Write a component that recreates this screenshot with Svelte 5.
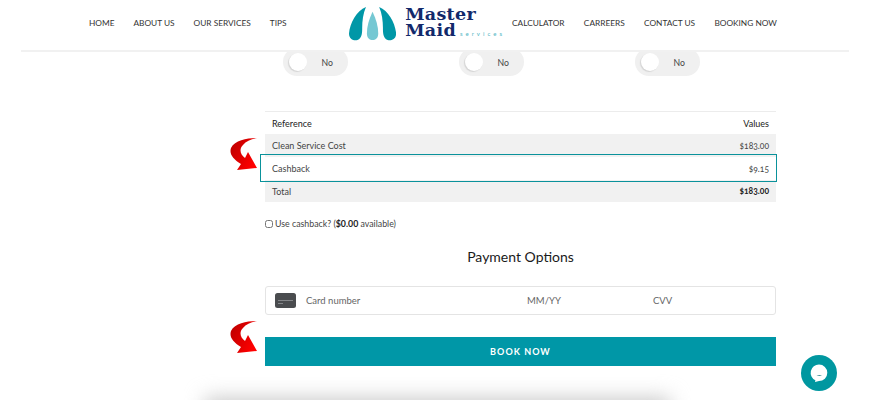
<script>
  const navLeft = ['HOME', 'ABOUT US', 'OUR SERVICES', 'TIPS'];
  const navRight = ['CALCULATOR', 'CARREERS', 'CONTACT US', 'BOOKING NOW'];
  const rows = [
    { label: 'Clean Service Cost', value: '$183.00', shaded: true },
    { label: 'Cashback', value: '$9.15' },
    { label: 'Total', value: '$183.00', shaded: true, strong: true }
  ];
  const arrow = 'M27 1C17 1 5 3 1 11C-1 17 3 22 11 27L7 33L27 31L18 15L15 21C10 17 9 12 13 8C16 4 21 2 27 1Z';
</script>

<div class="page">
  <header>
    <nav class="nav-left">
      {#each navLeft as item}<a href="#top">{item}</a>{/each}
    </nav>
    <div class="logo">
      <svg width="50" height="36" viewBox="0 0 50 36">
        <path d="M18 0C8 4 1 17 0 28C0 34 5 36 9 35C14 33 14 27 14 22C14 15 15 7 18 0Z" fill="#0097a7" />
        <path d="M32 0C42 4 49 17 50 28C50 34 45 36 41 35C36 33 36 27 36 22C36 15 35 7 32 0Z" fill="#0097a7" />
        <path d="M25 5C21 13 19 21 19 28C19 33 22 35 25 35C28 35 31 33 31 28C31 21 29 13 25 5Z" fill="#75c8d3" />
      </svg>
      <div class="wordmark">
        <span>Master</span>
        <span class="maid">Maid<small>services</small></span>
      </div>
    </div>
    <nav class="nav-right">
      {#each navRight as item}<a href="#top">{item}</a>{/each}
    </nav>
  </header>

  <div class="toggles">
    {#each [0, 1, 2] as t}
      <div class="toggle"><span class="knob"></span><span>No</span></div>
    {/each}
  </div>

  <main>
    <div class="table">
      <div class="row head"><span>Reference</span><span>Values</span></div>
      {#each rows as row}
        <div class="row" class:shaded={row.shaded} class:strong={row.strong}>
          <span>{row.label}</span><span class="value">{row.value}</span>
        </div>
      {/each}
      <div class="highlight"></div>
      <svg class="arrow first" width="28" height="35" viewBox="0 0 28 35"><defs><linearGradient id="red" x1="0" y1="0" x2="1" y2="0.6"><stop offset="0" stop-color="#b80000" /><stop offset="1" stop-color="#ff0000" /></linearGradient></defs><path d={arrow} fill="url(#red)" /></svg>
    </div>

    <label class="cashback">
      <input type="checkbox" />
      <span>Use cashback? (<b>$0.00</b> available)</span>
    </label>

    <h2>Payment Options</h2>

    <div class="card">
      <svg width="21" height="15" viewBox="0 0 21 15">
        <rect width="21" height="15" rx="2.5" fill="#4a4c4f" />
        <rect x="3" y="7" width="15" height="1" fill="#85878a" />
        <rect x="3" y="10" width="5" height="1" fill="#85878a" />
      </svg>
      <span class="number">Card number</span>
      <span class="expiry">MM/YY</span>
      <span>CVV</span>
    </div>

    <div class="book-wrap">
      <button>BOOK NOW</button>
      <svg class="arrow second" width="28" height="35" viewBox="0 0 28 35"><path d={arrow} fill="url(#red)" /></svg>
    </div>
  </main>

  <div class="bottom-shadow"></div>

  <div class="chat">
    <svg width="20" height="20" viewBox="0 0 20 20">
      <path d="M10 1.5A8.3 8.3 0 0 1 10 18.1L6 19L6.4 17.3A8.3 8.3 0 0 1 10 1.5Z" fill="#fff" />
      <path d="M7.5 12.2Q10.5 13.6 13 12.2Z" fill="#0b6f78" />
    </svg>
  </div>
</div>

<style>
  :global(body) {
    margin: 0;
    background: #fff;
  }
  .page {
    position: relative;
    width: 870px;
    height: 400px;
    overflow: hidden;
    font-family: Lato, "Open Sans", sans-serif;
    color: #444;
  }
  header {
    position: relative;
    z-index: 2;
    display: flex;
    align-items: flex-start;
    height: 50px;
    margin: 0 21px;
    padding-left: 68px;
    background: #fff;
    border-bottom: 2px solid #f1f1f1;
  }
  nav {
    display: flex;
    padding-top: 18px;
    font-size: 8.3px;
    line-height: 11px;
  }
  nav a {
    color: #333;
    text-decoration: none;
  }
  .nav-left {
    gap: 19px;
    width: 260px;
  }
  .nav-right {
    gap: 19.3px;
    margin-left: 7px;
  }
  .logo {
    display: flex;
    gap: 9px;
    padding-top: 6px;
    width: 156px;
  }
  .wordmark {
    display: flex;
    flex-direction: column;
    font-family: "DejaVu Serif", serif;
    font-weight: 700;
    font-size: 17.5px;
    letter-spacing: 0.3px;
    line-height: 16px;
    color: #12296b;
  }
  .maid {
    display: flex;
    align-items: baseline;
  }
  .maid small {
    margin-left: 4px;
    font-family: Lato, sans-serif;
    font-weight: 400;
    font-size: 6px;
    letter-spacing: 3px;
    color: #4fb6c3;
  }
  .toggles {
    display: flex;
    gap: 111px;
    margin: -4px 0 0 283px;
  }
  .toggle {
    display: flex;
    align-items: center;
    box-sizing: border-box;
    width: 65px;
    height: 28px;
    padding: 0 15px 0 6px;
    justify-content: space-between;
    border-radius: 14px;
    background: #f0f0f0;
    font-size: 8.7px;
  }
  .knob {
    width: 18px;
    height: 18px;
    border-radius: 50%;
    background: #fff;
    box-shadow: -1px 1px 1px #d4d4d4;
  }
  main {
    width: 511px;
    margin: 35px 0 0 265px;
  }
  .table {
    position: relative;
    border-top: 1px solid #ececec;
    font-size: 9px;
  }
  .row {
    display: flex;
    justify-content: space-between;
    align-items: center;
    height: 23px;
    padding: 0 7px;
  }
  .row.head {
    height: 22px;
    color: #222;
  }
  .row.shaded {
    background: #f1f1f1;
  }
  .row.strong {
    height: 22px;
  }
  .value {
    font-variant-numeric: oldstyle-nums;
    font-size: 8.5px;
  }
  .row.strong .value {
    font-weight: 700;
    color: #222;
  }
  .highlight {
    position: absolute;
    left: -5px;
    right: -1px;
    top: 42px;
    height: 26px;
    border: 1px solid #0a929b;
  }
  .arrow {
    position: absolute;
    left: -35px;
  }
  .arrow.first {
    top: 25px;
  }
  .cashback {
    display: flex;
    align-items: center;
    gap: 2px;
    margin-top: 16px;
    font-size: 8.8px;
    line-height: 12px;
  }
  .cashback input {
    width: 8px;
    height: 8px;
    margin: 0;
  }
  .cashback b {
    color: #222;
  }
  h2 {
    margin: 17px 0 0;
    text-align: center;
    font-size: 14px;
    line-height: 20px;
    font-weight: 400;
    color: #1a1a1a;
  }
  .card {
    display: flex;
    align-items: center;
    box-sizing: border-box;
    height: 29px;
    margin-top: 19px;
    padding-left: 9px;
    border: 1px solid #e4e4e4;
    border-radius: 3px;
    font-size: 9.5px;
    color: #666;
  }
  .number {
    margin-left: 10px;
    width: 221px;
  }
  .expiry {
    width: 126px;
  }
  .book-wrap {
    position: relative;
    margin-top: 22px;
  }
  button {
    display: block;
    width: 100%;
    height: 29px;
    border: 0;
    background: #0097a7;
    color: #fff;
    font-family: Lato, sans-serif;
    font-size: 9px;
    font-weight: 700;
    letter-spacing: 1.05px;
  }
  .arrow.second {
    top: -17px;
  }
  .bottom-shadow {
    position: absolute;
    left: 205px;
    top: 398px;
    width: 465px;
    height: 24px;
    background: #c8c8c8;
    filter: blur(10px);
  }
  .chat {
    position: absolute;
    left: 801px;
    top: 355px;
    width: 36px;
    height: 36px;
    display: flex;
    align-items: center;
    justify-content: center;
    border-radius: 50%;
    background: #0097a0;
  }
</style>
